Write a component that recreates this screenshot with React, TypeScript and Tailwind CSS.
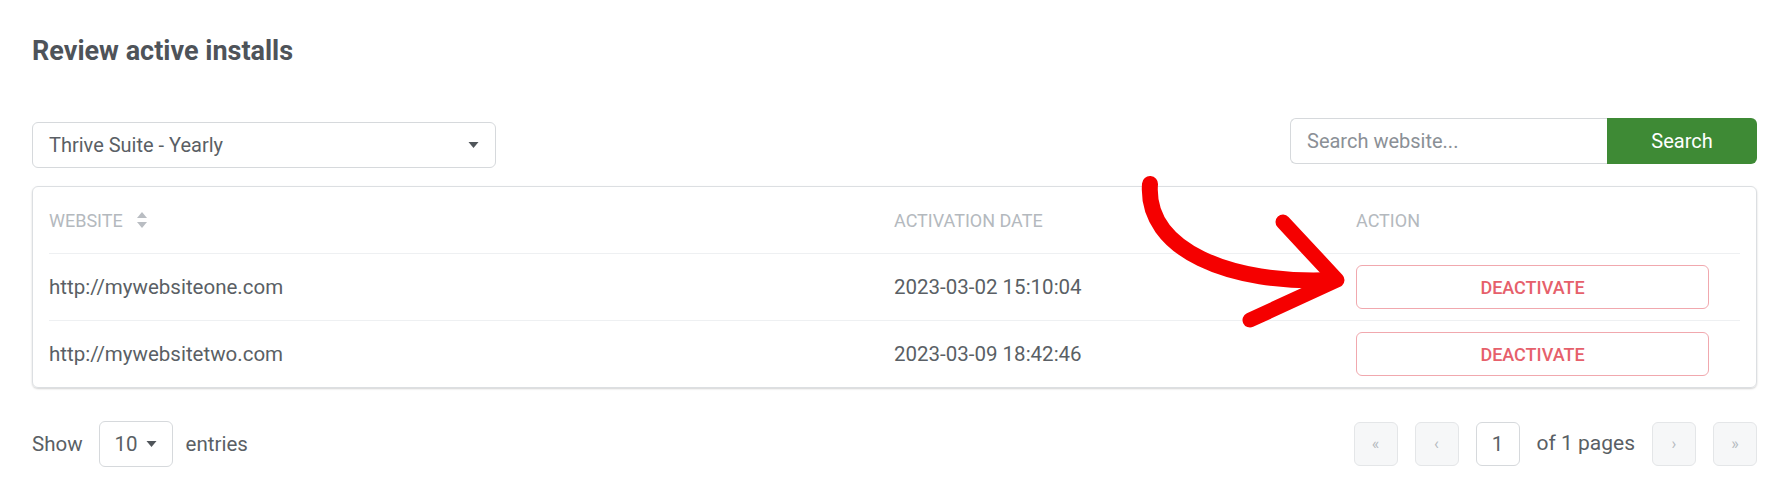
const rows = [
  { site: "http://mywebsiteone.com", date: "2023-03-02 15:10:04" },
  { site: "http://mywebsitetwo.com", date: "2023-03-09 18:42:46" },
];

function Caret({ className }: { className?: string }) {
  return (
    <svg viewBox="0 0 10 6" className={className} fill="currentColor">
      <path d="M0 0h10L5 6z" />
    </svg>
  );
}

function SortIcon() {
  return (
    <svg viewBox="0 0 10 16" className="h-[16px] w-[10px] text-[#b9bdc2]" fill="currentColor">
      <path d="M5 0l5 6H0z" />
      <path d="M5 16l5-6H0z" />
    </svg>
  );
}

function PageButton({ label }: { label: string }) {
  return (
    <button className="flex h-[44px] w-[44px] items-center justify-center rounded-md border border-[#e4e6e8] bg-[#f6f7f8] text-[16px] text-[#b5babf]">
      {label}
    </button>
  );
}

export default function App() {
  return (
    <div className="relative h-[504px] w-full overflow-hidden bg-white px-8 font-['Roboto',sans-serif] text-[#5a5f65]">
      <h2 className="pt-[36px] text-[27px] font-bold leading-[30px] text-[#4e5359]">Review active installs</h2>

      <div className="mt-[52px] flex items-start justify-between">
        <div className="mt-1 flex h-[46px] w-[464px] items-center justify-between rounded-md border border-[#d6d9dc] pl-4 pr-[16px] text-[20px] text-[#5a5f65]">
          <span>Thrive Suite - Yearly</span>
          <Caret className="h-[6px] w-[11px] text-[#50555a]" />
        </div>
        <div className="flex h-[46px]">
          <div className="flex w-[317px] items-center rounded-l-md border border-r-0 border-[#d6d9dc] px-4 text-[20px] text-[#8b9096]">
            Search website...
          </div>
          <button className="w-[150px] rounded-r-md bg-[#3e8a35] text-[20px] text-white">Search</button>
        </div>
      </div>

      <div className="mt-[18px] rounded-md border border-[#dcdfe2] px-4 shadow-[0_1px_2px_rgba(0,0,0,0.18)]">
        <div className="grid h-[66px] grid-cols-[845px_462px_1fr] items-center text-[18px] uppercase text-[#b4b9be]">
          <div className="flex items-center gap-[14px]">
            WEBSITE <SortIcon />
          </div>
          <div>ACTIVATION DATE</div>
          <div>ACTION</div>
        </div>
        {rows.map((r) => (
          <div
            key={r.site}
            className="grid h-[67px] grid-cols-[845px_462px_1fr] items-center border-t border-[#eef0f2] text-[20.5px]"
          >
            <div>{r.site}</div>
            <div>{r.date}</div>
            <div className="pr-8">
              <button className="flex h-[44px] w-[353px] items-center justify-center rounded-md border border-[#f1a8ae] text-[18px] font-medium text-[#e6606b]">
                DEACTIVATE
              </button>
            </div>
          </div>
        ))}
      </div>

      <div className="mt-[33px] flex items-center justify-between">
        <div className="flex items-center text-[20.5px]">
          <span>Show</span>
          <div className="ml-4 mr-[13px] flex h-[46px] w-[74px] items-center justify-center gap-2 rounded-md border border-[#d6d9dc]">
            <span>10</span>
            <Caret className="h-[6px] w-[11px] text-[#50555a]" />
          </div>
          <span>entries</span>
        </div>
        <div className="flex items-center gap-[17px]">
          <PageButton label="«" />
          <PageButton label="‹" />
          <div className="flex h-[44px] w-[44px] items-center justify-center rounded-md border border-[#d6d9dc] text-[20.5px]">
            1
          </div>
          <span className="text-[21px]">of 1 pages</span>
          <PageButton label="›" />
          <PageButton label="»" />
        </div>
      </div>

      <svg className="pointer-events-none absolute left-0 top-0 h-[504px] w-[1789px]" viewBox="0 0 1789 504" fill="none">
        <path
          d="M1150 184 C1145 250 1230 285 1333 280"
          stroke="#f50000"
          strokeWidth="16"
          strokeLinecap="round"
        />
        <path
          d="M1283 222 L1337 280 L1250 320"
          stroke="#f50000"
          strokeWidth="15"
          strokeLinecap="round"
          strokeLinejoin="round"
        />
      </svg>
    </div>
  );
}
